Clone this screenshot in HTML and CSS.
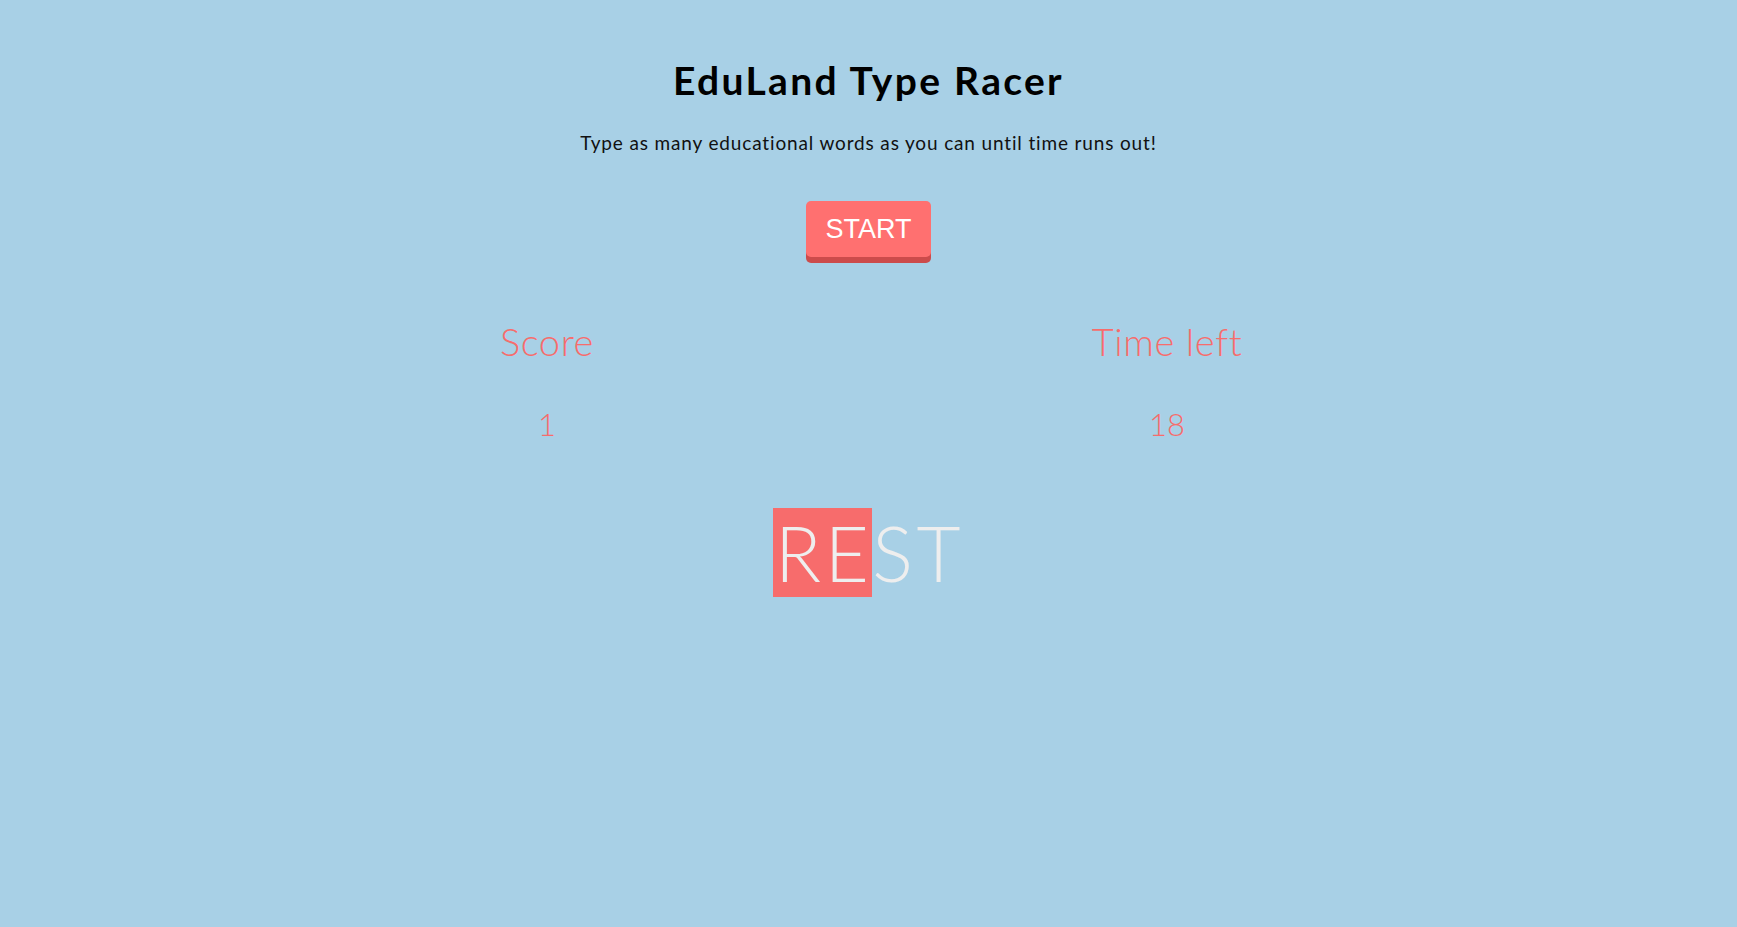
FILE: index.html
```html
<!DOCTYPE html>
<html lang="en">
<head>
<meta charset="utf-8">
<title>EduLand Type Racer</title>
<link rel="stylesheet" href="styles.css">
</head>
<body>
<main class="game">
  <h1 class="title">EduLand Type Racer</h1>
  <p class="subtitle">Type as many educational words as you can until time runs out!</p>
  <button class="start-btn" type="button">START</button>
  <section class="stats">
    <div class="stat">
      <h2 class="stat-label">Score</h2>
      <div class="stat-value">1</div>
    </div>
    <div class="stat">
      <h2 class="stat-label">Time left</h2>
      <div class="stat-value">18</div>
    </div>
  </section>
  <div class="word"><span class="typed">RE</span><span class="rest">ST</span></div>
</main>
</body>
</html>
```

FILE: styles.css
```css
html, body {
  margin: 0;
  padding: 0;
}
body {
  background: #a8d0e6;
  font-family: "Lato", "Open Sans", sans-serif;
  color: #000;
  min-height: 927px;
}
.game {
  display: flex;
  flex-direction: column;
  align-items: center;
  padding-top: 56px;
  text-align: center;
}
.title {
  margin: 0;
  font-size: 39px;
  line-height: 48px;
  font-weight: 700;
  letter-spacing: 2.3px;
  color: #000;
}
.subtitle {
  margin: 27px 0 0;
  font-size: 19px;
  line-height: 24px;
  font-weight: 400;
  letter-spacing: 0.85px;
  color: #111;
}
.start-btn {
  margin-top: 46px;
  width: 125px;
  height: 56px;
  border: none;
  border-radius: 5px;
  background: #ff7070;
  box-shadow: 0 6px 0 #cc4b4b;
  color: #fff;
  font-family: "Liberation Sans", Arial, sans-serif;
  font-size: 27px;
  padding: 0;
  cursor: pointer;
}
.stats {
  margin-top: 61px;
  width: 1240px;
  display: grid;
  grid-template-columns: 597px 643px;
}
.stat {
  display: flex;
  flex-direction: column;
  align-items: center;
}
.stat-label {
  margin: 0;
  font-size: 38px;
  line-height: 46px;
  font-weight: 300;
  letter-spacing: 0.6px;
  color: #f76c6c;
}
.stat-value {
  margin-top: 42px;
  font-size: 31px;
  line-height: 36px;
  font-weight: 300;
  color: #f76c6c;
}
.word {
  margin-top: 66px;
  font-size: 76px;
  line-height: 89px;
  height: 89px;
  color: #eeeeee;
  font-weight: 300;
  letter-spacing: 3.5px;
  white-space: nowrap;
}
.word span {
  display: inline-block;
  height: 89px;
  vertical-align: top;
}
.typed {
  background: #f76c6c;
  padding-left: 2px;
}
```
